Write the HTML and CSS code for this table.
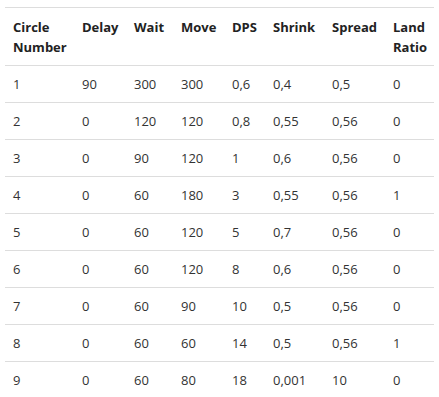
FILE: index.html
```html
<!DOCTYPE html>
<html>
<head>
<meta charset="utf-8">
<link rel="stylesheet" href="styles.css">
</head>
<body>
<div class="wrap">
<table class="circles">
<colgroup>
<col class="c1"><col class="c2"><col class="c3"><col class="c4"><col class="c5"><col class="c6"><col class="c7"><col class="c8">
</colgroup>
<thead>
<tr><th>Circle Number</th><th>Delay</th><th>Wait</th><th>Move</th><th>DPS</th><th>Shrink</th><th>Spread</th><th>Land Ratio</th></tr>
</thead>
<tbody>
<tr><td>1</td><td>90</td><td>300</td><td>300</td><td>0,6</td><td>0,4</td><td>0,5</td><td>0</td></tr>
<tr><td>2</td><td>0</td><td>120</td><td>120</td><td>0,8</td><td>0,55</td><td>0,56</td><td>0</td></tr>
<tr><td>3</td><td>0</td><td>90</td><td>120</td><td>1</td><td>0,6</td><td>0,56</td><td>0</td></tr>
<tr><td>4</td><td>0</td><td>60</td><td>180</td><td>3</td><td>0,55</td><td>0,56</td><td>1</td></tr>
<tr><td>5</td><td>0</td><td>60</td><td>120</td><td>5</td><td>0,7</td><td>0,56</td><td>0</td></tr>
<tr><td>6</td><td>0</td><td>60</td><td>120</td><td>8</td><td>0,6</td><td>0,56</td><td>0</td></tr>
<tr><td>7</td><td>0</td><td>60</td><td>90</td><td>10</td><td>0,5</td><td>0,56</td><td>0</td></tr>
<tr><td>8</td><td>0</td><td>60</td><td>60</td><td>14</td><td>0,5</td><td>0,56</td><td>1</td></tr>
<tr><td>9</td><td>0</td><td>60</td><td>80</td><td>18</td><td>0,001</td><td>10</td><td>0</td></tr>
</tbody>
</table>
</div>
</body>
</html>
```
FILE: styles.css
```css
html, body {
  margin: 0;
  padding: 0;
  background: #fff;
}
.wrap {
  padding: 7px 5px;
}
.circles {
  border-collapse: collapse;
  table-layout: fixed;
  width: 429px;
  font-family: "Open Sans", sans-serif;
  font-size: 13px;
  line-height: 20px;
  color: #333;
  border-top: 1px solid #ddd;
}
.c1 { width: 69px; }
.c2 { width: 52px; }
.c3 { width: 47px; }
.c4 { width: 51px; }
.c5 { width: 41px; }
.c6 { width: 59px; }
.c7 { width: 61px; }
.c8 { width: 49px; }
.circles th {
  text-align: left;
  font-weight: 700;
  color: #222;
  padding: 9px 8px 8px;
  vertical-align: top;
  border-bottom: 1px solid #ddd;
}
.circles td {
  padding: 8px 8px;
  border-bottom: 1px solid #ddd;
}
.circles tbody tr:last-child td {
  border-bottom: none;
}
```
